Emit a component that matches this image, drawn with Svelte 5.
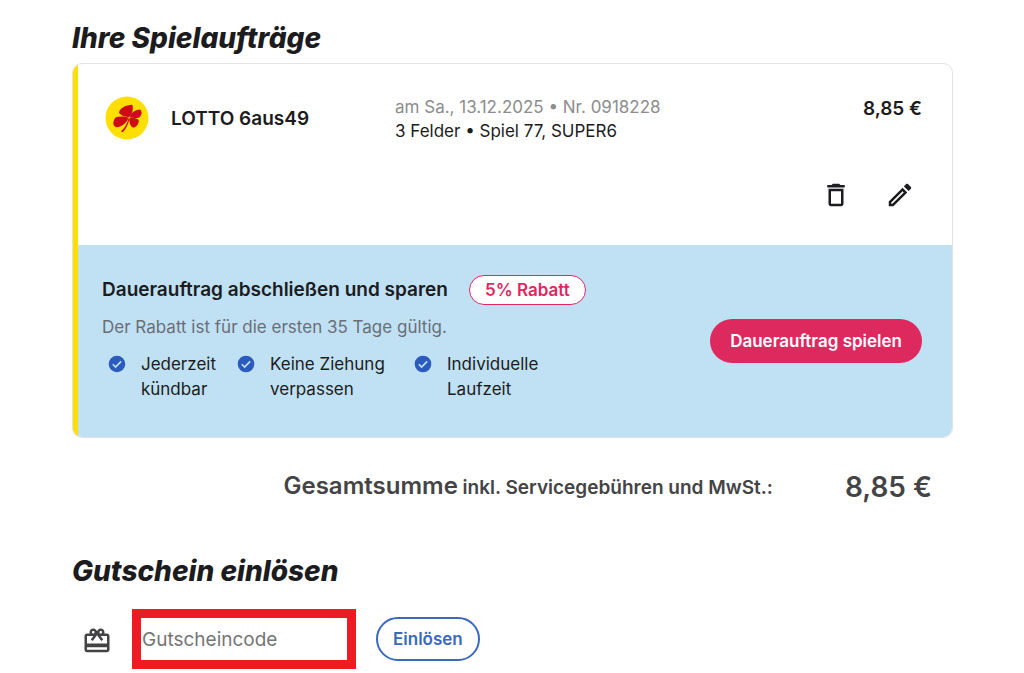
<script lang="ts">
  interface Order {
    id: string;
    name: string;
    meta: string;
    details: string;
    price: string;
  }

  const orders: Order[] = [
    {
      id: '0918228',
      name: 'LOTTO 6aus49',
      meta: 'am Sa., 13.12.2025 • Nr. 0918228',
      details: '3 Felder • Spiel 77, SUPER6',
      price: '8,85 €',
    },
  ];

  const benefits = [
    ['Jederzeit', 'kündbar'],
    ['Keine Ziehung', 'verpassen'],
    ['Individuelle', 'Laufzeit'],
  ];

  let code = $state('');
</script>

<main class="page">
  <h2 class="title">Ihre Spielaufträge</h2>

  {#each orders as order (order.id)}
    <article class="card">
      <div class="order">
        <svg class="logo" viewBox="0 0 44 44" aria-hidden="true">
          <circle cx="22" cy="22" r="21.5" fill="#ffdf00" />
          <g fill="#cf0a14">
            <path d="M23.8 21.2C19.4 20.9 15.2 19.2 14 16.6C14.6 12 21 8.8 27.2 8.7C28.8 12.6 27.4 17.8 23.8 21.2Z" />
            <path d="M24.8 21.3C25.4 17.4 29.6 13.8 35 13.6C37.6 15.4 36.8 19.2 34.6 21.2C31.8 22.4 28 22.2 24.8 21.3Z" />
            <path d="M23.6 21.8C21.8 26.6 17.2 31 11.9 31.2C8.2 30.6 7.6 26.8 9 24.4C9.2 22 11.6 20.4 13.8 20.8C17 20.2 20.8 20.7 23.6 21.8Z" />
            <path d="M24.5 21.8C28 21.4 32 22 33.6 23.9C34.4 27.2 31.6 31.4 27.6 31.6C24.8 29.6 23.8 25.6 24.5 21.8Z" />
            <path d="M23.4 22.4L24.4 22.8C23.6 28 21 33 17.8 36.2L16 35.2C19.8 32 22.2 27.6 23.4 22.4Z" />
          </g>
        </svg>
        <h3 class="name">{order.name}</h3>
        <div class="info">
          <p class="meta">{order.meta}</p>
          <p>{order.details}</p>
        </div>
        <div class="side">
          <strong class="price">{order.price}</strong>
          <div class="actions">
            <button class="icon-button" type="button" aria-label="Löschen">
              <svg class="icon" viewBox="0 0 24 24" aria-hidden="true">
                <path d="M6 19c0 1.1.9 2 2 2h8c1.1 0 2-.9 2-2V7H6v12zM8 9h8v10H8V9zm7.500-5l-1-1h-5l-1 1H5v2h14V4z" />
              </svg>
            </button>
            <button class="icon-button" type="button" aria-label="Bearbeiten">
              <svg class="icon" viewBox="0 0 24 24" aria-hidden="true">
                <path d="M14.060 9.020l.92.92L5.920 19H5v-.92l9.060-9.060M17.660 3c-.25 0-.51.1-.7.290l-1.830 1.830 3.750 3.750 1.830-1.830c.39-.39.39-1.020 0-1.410l-2.340-2.340c-.2-.2-.45-.29-.71-.29zm-3.600 3.190L3 17.250V21h3.750L17.810 9.940l-3.750-3.750z" />
              </svg>
            </button>
          </div>
        </div>
      </div>

      <div class="promo">
        <div class="promo-text">
          <div class="promo-head">
            <h3>Dauerauftrag abschließen und sparen</h3>
            <span class="badge">5% Rabatt</span>
          </div>
          <p class="hint">Der Rabatt ist für die ersten 35 Tage gültig.</p>
          <ul class="benefits">
            {#each benefits as [first, second]}
              <li>
                <svg class="check" viewBox="0 0 24 24" aria-hidden="true">
                  <circle cx="12" cy="12" r="10" fill="#2b5bbd" />
                  <path d="M7 12.300l3.300 3.300L17 8.900" fill="none" stroke="#c0e0f4" stroke-width="2" />
                </svg>
                <span>{first}<br />{second}</span>
              </li>
            {/each}
          </ul>
        </div>
        <button class="primary" type="button">Dauerauftrag spielen</button>
      </div>
    </article>
  {/each}

  <div class="total">
    <p><span class="sum">Gesamtsumme</span> inkl. Servicegebühren und MwSt.:</p>
    <strong>8,85 €</strong>
  </div>

  <h2 class="title">Gutschein einlösen</h2>
  <form class="voucher" onsubmit={(e) => e.preventDefault()}>
    <label for="voucher-code" aria-label="Gutscheincode">
      <svg class="icon" viewBox="0 0 24 24" aria-hidden="true">
        <path d="M20 6h-2.180c.11-.31.18-.65.18-1 0-1.660-1.340-3-3-3-1.050 0-1.960.54-2.500 1.350l-.5.67-.5-.68C10.960 2.540 10.050 2 9 2 7.340 2 6 3.340 6 5c0 .35.07.69.18 1H4c-1.110 0-1.990.89-1.990 2L2 19c0 1.110.89 2 2 2h16c1.110 0 2-.89 2-2V8c0-1.110-.89-2-2-2zm-5-2c.55 0 1 .45 1 1s-.45 1-1 1-1-.45-1-1 .45-1 1-1zM9 4c.55 0 1 .45 1 1s-.45 1-1 1-1-.45-1-1 .45-1 1-1zm11 15H4v-2h16v2zm0-5H4V8h5.080L7 10.830 8.620 12 12 7.400l3.380 4.600L17 10.830 14.920 8H20v6z" />
      </svg>
    </label>
    <input id="voucher-code" type="text" placeholder="Gutscheincode" bind:value={code} />
    <button class="secondary" type="submit">Einlösen</button>
  </form>
</main>

<style>
  :global(body) {
    margin: 0;
    background: #fff;
  }

  .page {
    padding: 20px 71px 4px 72px;
    font-family: Inter, 'Liberation Sans', sans-serif;
    font-size: 17px;
    line-height: 24px;
    color: #1c1c20;
  }

  h3,
  p,
  ul {
    margin: 0;
    padding: 0;
  }

  button {
    font-family: inherit;
    cursor: pointer;
  }

  .title {
    margin: 0;
    font-size: 28px;
    line-height: 36px;
    font-weight: 800;
    font-style: italic;
  }

  /* order card */
  .card {
    position: relative;
    margin-top: 7px;
    border: 1px solid #e2e2e4;
    border-radius: 10px;
    overflow: hidden;
  }

  .card::before {
    content: '';
    position: absolute;
    inset: 0 auto 0 0;
    width: 5px;
    background: #ffdf00;
  }

  .order {
    display: grid;
    grid-template-columns: 44px 202px 1fr auto;
    column-gap: 22px;
    min-height: 120px;
    padding: 31px 30px 30px 32px;
  }

  .logo {
    width: 44px;
    height: 44px;
    margin-top: 1px;
  }

  .name {
    font-size: 19px;
    line-height: 48px;
    font-weight: 600;
  }

  .meta {
    color: #8c8c8c;
  }

  .side {
    display: flex;
    flex-direction: column;
    align-items: flex-end;
    gap: 52px;
  }

  .price {
    font-size: 19px;
    line-height: 28px;
    font-weight: 600;
  }

  .actions {
    display: flex;
    gap: 24px;
    padding-right: 2px;
  }

  .icon-button {
    display: flex;
    padding: 5px;
    border: 0;
    background: none;
    color: inherit;
  }

  .icon {
    display: block;
    width: 30px;
    height: 30px;
    fill: currentColor;
  }

  /* standing order promo */
  .promo {
    display: flex;
    justify-content: space-between;
    align-items: center;
    padding: 30px 30px 31px 29px;
    background: #c0e0f4;
  }

  .promo-text {
    padding-bottom: 4px;
  }

  .promo-head {
    display: flex;
    align-items: center;
    gap: 21px;
  }

  .promo-head h3 {
    font-size: 19px;
    font-weight: 600;
  }

  .badge {
    padding: 2px 15px;
    border: 1px solid #e0285f;
    border-radius: 16px;
    background: #fff;
    color: #e0285f;
    font-weight: 600;
  }

  .hint {
    margin-top: 10px;
    color: #6a6f76;
  }

  .benefits {
    display: grid;
    grid-template-columns: 109px 157px auto;
    justify-content: start;
    gap: 20px;
    margin-top: 13px;
    padding-left: 5px;
    line-height: 25px;
    list-style: none;
  }

  .benefits li {
    display: flex;
    gap: 14px;
  }

  .check {
    width: 20px;
    height: 20px;
    margin-top: 2px;
  }

  .primary {
    height: 44px;
    padding: 0 20px;
    border: 0;
    border-radius: 22px;
    background: #de295f;
    color: #fff;
    font-size: 17px;
    font-weight: 600;
  }

  .total {
    display: flex;
    justify-content: flex-end;
    align-items: center;
    gap: 72px;
    margin: 29px 21px 46px;
    font-size: 19px;
    line-height: 38px;
    font-weight: 600;
    color: #444446;
  }

  .sum {
    font-size: 24px;
  }

  .total strong {
    font-size: 28px;
    font-weight: 600;
  }

  /* voucher */
  .voucher {
    display: flex;
    align-items: center;
    gap: 20px;
    margin-top: 20px;
    padding-left: 10px;
  }

  .voucher label {
    padding-top: 4px;
    color: #444446;
  }

  input {
    box-sizing: border-box;
    width: 224px;
    height: 60px;
    padding: 0 1px;
    border: 9px solid #ed1c24;
    background: #fff;
    color: #1c1c20;
    font: inherit;
    font-size: 19px;
  }

  input::placeholder {
    color: #757575;
    opacity: 1;
  }

  .secondary {
    height: 44px;
    padding: 0 15px;
    border: 2px solid #3a68bd;
    border-radius: 22px;
    background: #fff;
    color: #3a68bd;
    font-size: 17px;
    font-weight: 600;
  }
</style>
